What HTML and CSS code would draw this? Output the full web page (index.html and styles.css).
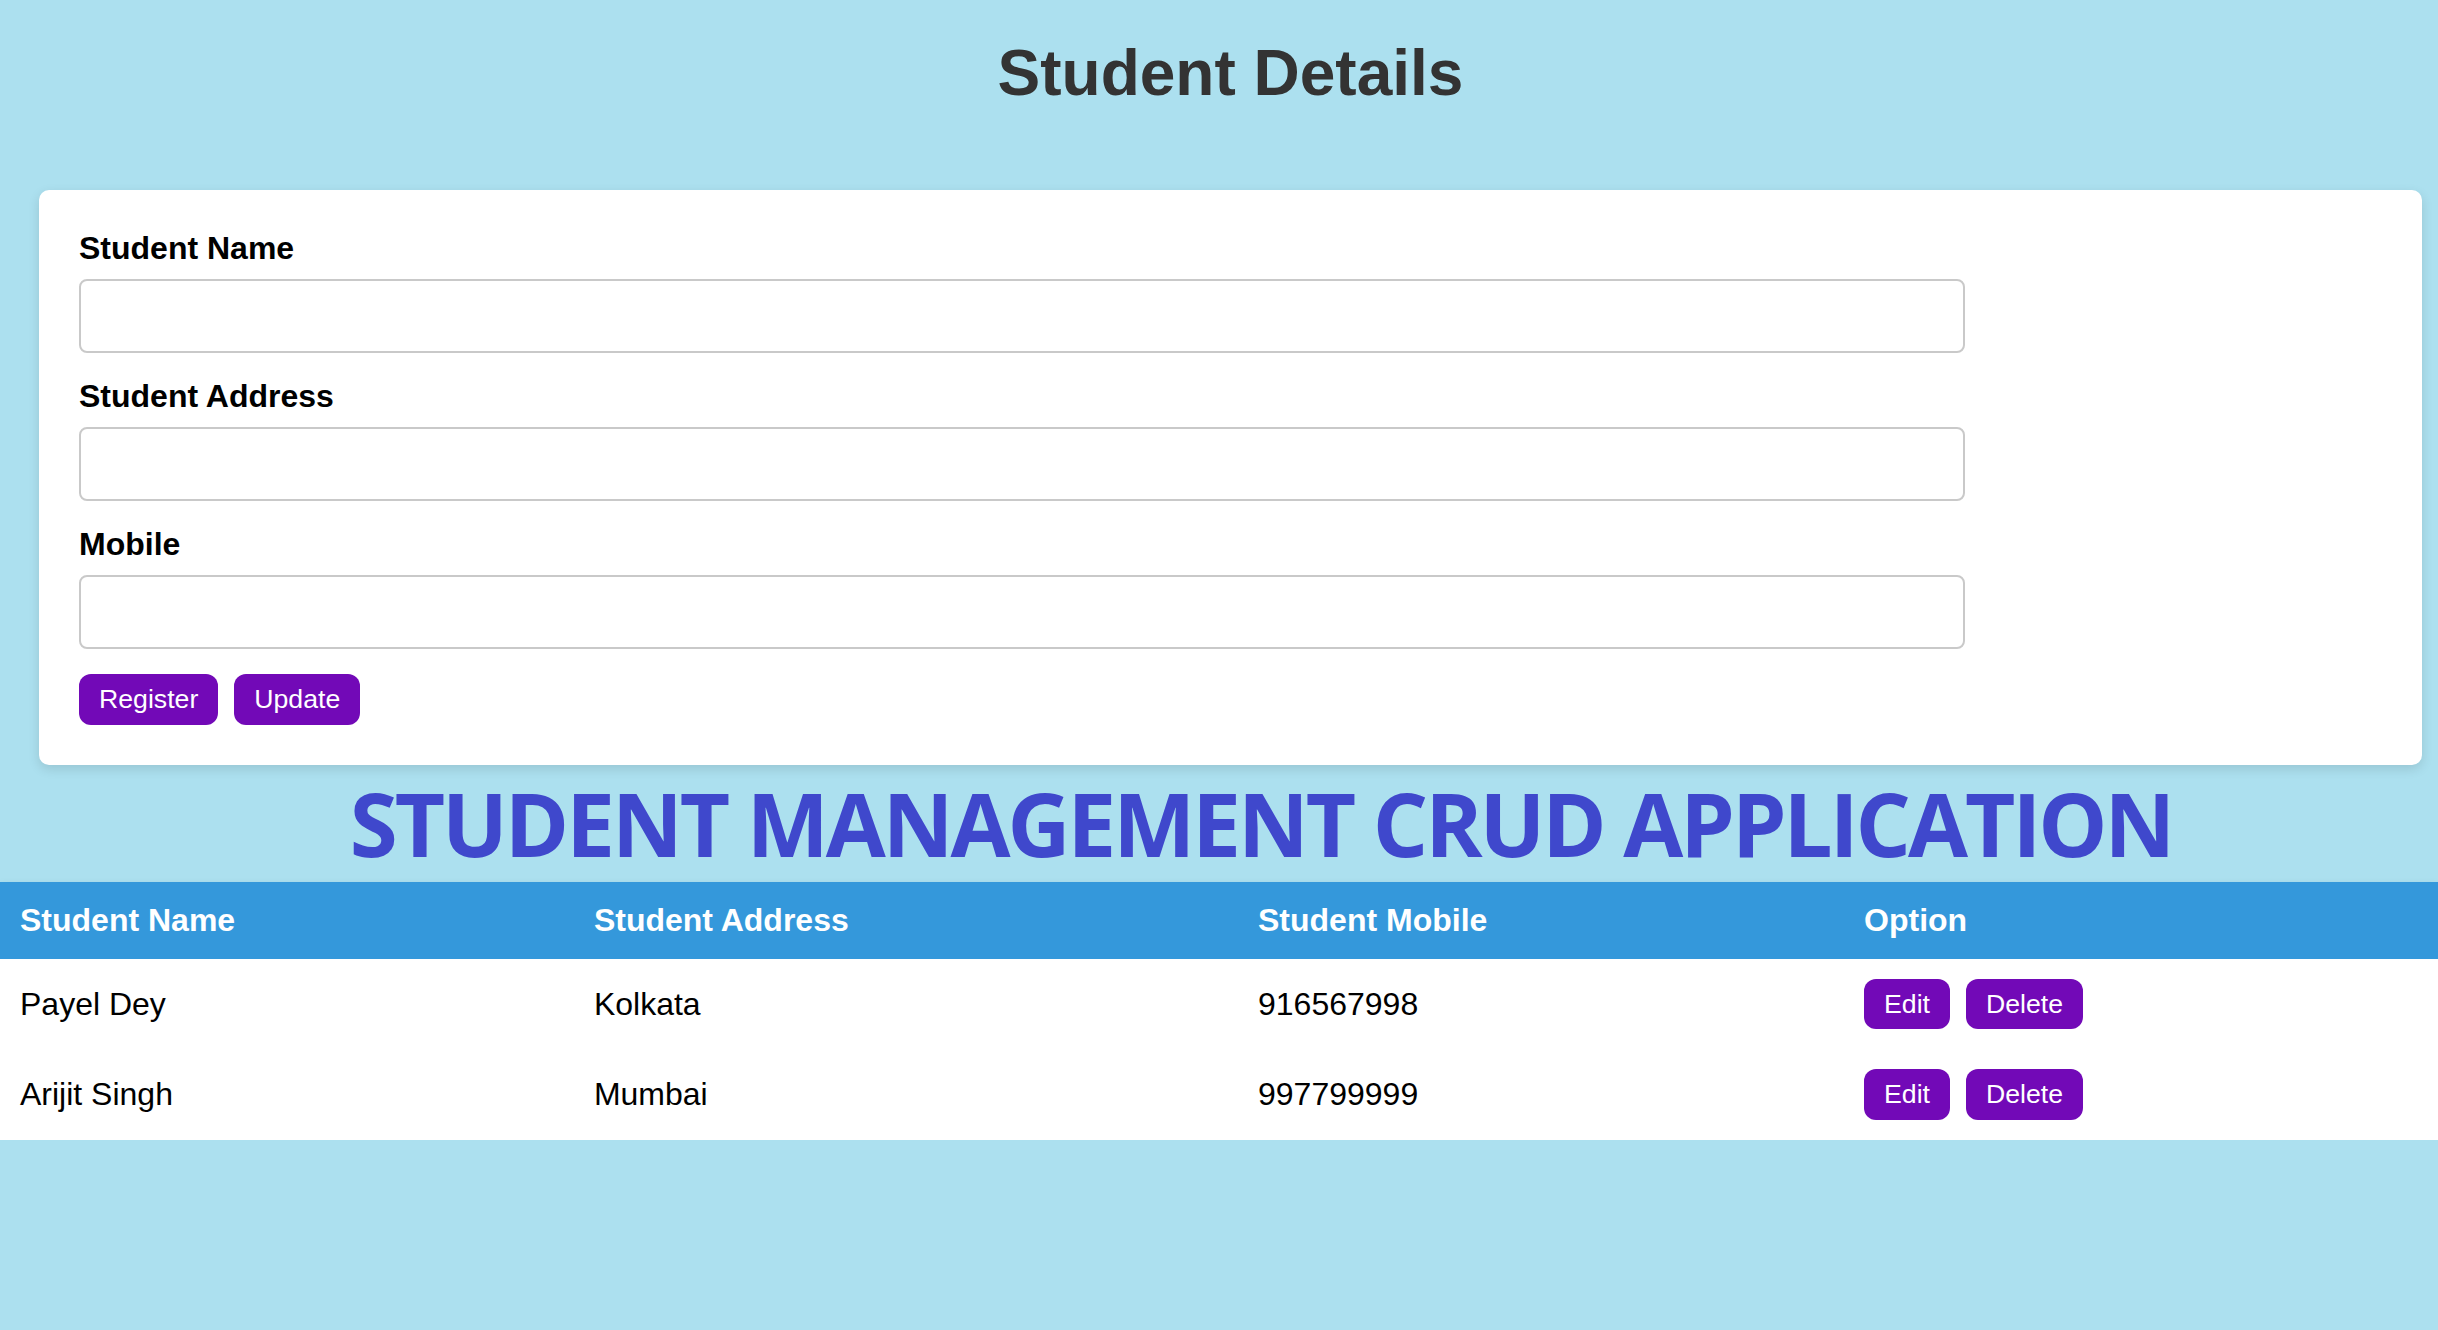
FILE: index.html
```html
<!DOCTYPE html>
<html lang="en">
<head>
<meta charset="utf-8">
<title>Student Details</title>
<link rel="stylesheet" href="styles.css">
</head>
<body>
  <div class="page">
    <h1 class="page-title">Student Details</h1>
    <section class="card">
      <form class="student-form">
        <div class="field">
          <label class="field-label" for="sname">Student Name</label>
          <input class="text-input" id="sname" type="text">
        </div>
        <div class="field">
          <label class="field-label" for="saddress">Student Address</label>
          <input class="text-input" id="saddress" type="text">
        </div>
        <div class="field">
          <label class="field-label" for="smobile">Mobile</label>
          <input class="text-input" id="smobile" type="text">
        </div>
        <div class="actions">
          <button type="button" class="btn">Register</button>
          <button type="button" class="btn">Update</button>
        </div>
      </form>
    </section>
  </div>

  <h2 class="crud-title">STUDENT MANAGEMENT CRUD APPLICATION</h2>

  <table class="student-table">
    <colgroup>
      <col class="col-name">
      <col class="col-address">
      <col class="col-mobile">
      <col class="col-option">
    </colgroup>
    <thead>
      <tr>
        <th>Student Name</th>
        <th>Student Address</th>
        <th>Student Mobile</th>
        <th>Option</th>
      </tr>
    </thead>
    <tbody>
      <tr>
        <td>Payel Dey</td>
        <td>Kolkata</td>
        <td>916567998</td>
        <td><div class="row-actions"><button type="button" class="btn">Edit</button><button type="button" class="btn">Delete</button></div></td>
      </tr>
      <tr>
        <td>Arijit Singh</td>
        <td>Mumbai</td>
        <td>997799999</td>
        <td><div class="row-actions"><button type="button" class="btn">Edit</button><button type="button" class="btn">Delete</button></div></td>
      </tr>
    </tbody>
  </table>
</body>
</html>
```
FILE: styles.css
```css
html {
  background: #ace0ef;
}

body {
  margin: 0;
  background: #ace0ef;
  font-family: "Liberation Sans", Arial, sans-serif;
  color: #000;
}

.page {
  margin: 0 16px 0 39px;
}

.page-title {
  margin: 36px 0 80px;
  font-size: 64px;
  line-height: 74px;
  font-weight: 700;
  color: #333;
  text-align: center;
}

.card {
  background: #fff;
  border-radius: 10px;
  padding: 40px;
  box-shadow: 0 4px 12px rgba(0, 0, 0, 0.12);
}

.student-form {
  display: flex;
  flex-direction: column;
  gap: 25px;
}

.field {
  display: flex;
  flex-direction: column;
  align-items: flex-start;
  gap: 12px;
}

.field-label {
  font-size: 32px;
  line-height: 37px;
  font-weight: 700;
  color: #000;
}

.text-input {
  box-sizing: border-box;
  width: calc(80% + 44px);
  height: 74px;
  padding: 0 20px;
  border: 2px solid #c9c9c9;
  border-radius: 8px;
  background: #fff;
  font-family: "Liberation Sans", Arial, sans-serif;
  font-size: 26.67px;
  outline: none;
}

.actions,
.row-actions {
  display: flex;
  gap: 16px;
}

.btn {
  font-family: "Liberation Sans", Arial, sans-serif;
  font-size: 26.67px;
  line-height: 30.67px;
  padding: 10px 20px;
  border: none;
  border-radius: 12px;
  background: #7209b7;
  color: #fff;
  cursor: pointer;
}

.crud-title {
  margin: 0;
  padding-left: 84px;
  font-family: "Open Sans", "Noto Sans", sans-serif;
  font-size: 87px;
  line-height: 117px;
  font-weight: 700;
  letter-spacing: -3px;
  color: #3f48cc;
  text-align: center;
  white-space: nowrap;
}

.student-table {
  width: 100%;
  border-collapse: collapse;
  background: #fff;
  box-shadow: 0 3px 8px rgba(0, 0, 0, 0.1);
  table-layout: fixed;
}

.col-name { width: 23.54%; }
.col-address { width: 27.24%; }
.col-mobile { width: 24.86%; }
.col-option { width: 24.36%; }

.student-table th {
  background: #3498db;
  color: #fff;
  font-size: 32px;
  line-height: 37px;
  font-weight: 700;
  text-align: left;
  padding: 20px;
}

.student-table td {
  font-size: 32px;
  line-height: 37px;
  text-align: left;
  vertical-align: middle;
  padding: 20px;
  color: #000;
}
```
